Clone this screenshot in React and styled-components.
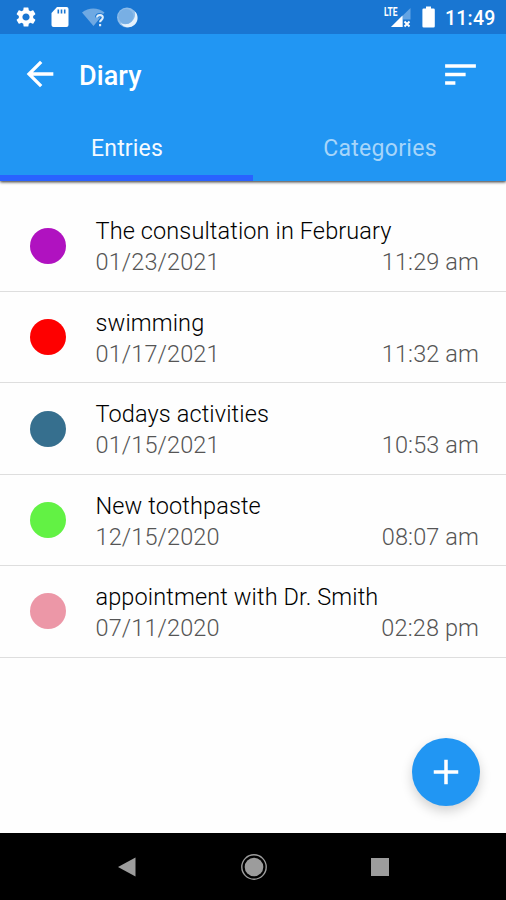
import React, { useState } from 'react';
import styled, { createGlobalStyle } from 'styled-components';
import { MdArrowBack, MdSort, MdAdd, MdSettings } from 'react-icons/md';

const GlobalStyle = createGlobalStyle`
  * {
    box-sizing: border-box;
  }

  body {
    margin: 0;
    font-family: Roboto, 'Noto Sans', sans-serif;
    background-color: #fefefe;
  }
`;

const Container = styled.div`
  display: flex;
  flex-direction: column;
  width: 506px;
  height: 900px;
  overflow: hidden;
`;

const StatusBar = styled.div`
  display: flex;
  flex: none;
  align-items: center;
  justify-content: space-between;
  height: 34px;
  padding: 0 11px 0 14px;
  background-color: #1976d2;
  color: white;
  z-index: 2;
`;

const StatusGroup = styled.div`
  display: flex;
  align-items: center;

  svg {
    display: block;
  }
`;

const Clock = styled.div`
  width: 50px;
  margin-left: 10px;
  padding-top: 3px;
  font-size: 19.5px;
  font-weight: 500;
  line-height: 22px;
  letter-spacing: 0.2px;
  white-space: nowrap;
`;

const Header = styled.div`
  flex: none;
  height: 147px;
  background-color: #2196f3;
  box-shadow: 0 1px 3px rgba(0, 0, 0, 0.85);
  z-index: 1;
`;

const Toolbar = styled.div`
  display: flex;
  align-items: center;
  height: 80px;
  padding: 0 25px 0 20px;
  color: white;

  svg {
    display: block;
  }
`;

const Title = styled.div`
  flex: 1;
  padding: 3px 0 0 19px;
  font-size: 27px;
  font-weight: 500;
  letter-spacing: 0.1px;
`;

const TabRow = styled.div`
  display: flex;
  height: 67px;
`;

const Tab = styled.div`
  display: flex;
  flex: 1;
  justify-content: center;
  align-items: center;
  padding: 7px 0 0 1px;
  font-size: 23px;
  letter-spacing: ${(props) => (props.$active ? '0.15px' : '0.3px')};
  color: ${(props) => (props.$active ? '#f4faff' : '#a6d5fa')};
  border-bottom: 6px solid ${(props) => (props.$active ? '#2962ff' : 'transparent')};
`;

const List = styled.div`
  flex: 1;
  padding-top: 19.5px;
  background-color: #fefefe;
`;

const Entry = styled.div`
  display: flex;
  align-items: center;
  height: 91.45px;
  padding: 0 27px 0 30px;
  border-bottom: 1.5px solid #dedede;
`;

const Dot = styled.div`
  width: 36px;
  height: 36px;
  margin-right: 29.5px;
  border-radius: 50%;
  background-color: ${(props) => props.color};
`;

const EntryText = styled.div`
  flex: 1;
  padding-top: 3px;
  font-size: 23.5px;
  font-weight: 300;
  line-height: 31px;
  letter-spacing: 0.12px;
`;

const EntryTitle = styled.div`
  color: black;
`;

const EntryMeta = styled.div`
  display: flex;
  justify-content: space-between;
  color: #555;
`;

const AddButton = styled.button`
  position: absolute;
  left: 412px;
  top: 738px;
  display: flex;
  justify-content: center;
  align-items: center;
  width: 68px;
  height: 68px;
  padding: 0;
  border: none;
  border-radius: 50%;
  color: white;
  background-color: #2196f3;
  box-shadow: 0 5px 12px rgba(0, 0, 0, 0.18);
`;

const NavBar = styled.div`
  display: flex;
  flex: none;
  align-items: center;
  justify-content: space-between;
  height: 67px;
  padding: 0 116px;
  background-color: black;
`;

const entries = [
  { title: 'The consultation in February', date: '01/23/2021', time: '11:29 am', color: '#b012c0' },
  { title: 'swimming', date: '01/17/2021', time: '11:32 am', color: '#fe0000' },
  { title: 'Todays activities', date: '01/15/2021', time: '10:53 am', color: '#366f8e' },
  { title: 'New toothpaste', date: '12/15/2020', time: '08:07 am', color: '#62f244' },
  { title: 'appointment with Dr. Smith', date: '07/11/2020', time: '02:28 pm', color: '#ec97a7' },
];

const tabs = ['Entries', 'Categories'];

const NotificationIcons = () => (
  <StatusGroup>
    <MdSettings size={24} />
    <svg width="100" height="34" viewBox="38 0 100 34">
      <path d="M57 7h9.500a2 2 0 0 1 2 2v16a2 2 0 0 1-2 2H53.500a2 2 0 0 1-2-2V13z" fill="white" />
      <path d="M57.500 9.500h1.600v4h-1.600zM60.700 9.500h1.600v4h-1.600zM63.900 9.500h1.600v4h-1.600z" fill="#1976d2" />
      <path d="M82 12.500C88.500 7 98 7 104.500 12.500L93.500 26z" fill="#6ea9e3" />
      <path
        d="M97 17.500c.3-3.200 5.800-3.200 5.800.2 0 2.300-2.700 2.300-2.700 4.900M100.100 24.500v2"
        fill="none"
        stroke="#1976d2"
        strokeWidth="4"
      />
      <path
        d="M97 17.500c.3-3.200 5.800-3.200 5.800.1 0 2.300-2.700 2.200-2.700 4.700M100.100 24v2.200"
        fill="none"
        stroke="#e0eefb"
        strokeWidth="2.100"
      />
      <circle cx="127" cy="17.500" r="10" fill="#8dbcea" />
      <path d="M134.500 11a9.300 9.300 0 1 1-14 12 10 10 0 0 0 14-12z" fill="#e4f1fc" />
      <circle cx="126" cy="16.500" r="7.600" fill="#78afe4" />
    </svg>
  </StatusGroup>
);

const SignalLabel = styled.span`
  align-self: flex-start;
  width: 14px;
  margin: 6px -9px 0 2px;
  font-size: 12px;
  font-weight: 700;
  line-height: 13px;
  transform: scaleX(0.7);
  transform-origin: left;
  z-index: 1;
`;

const SystemIcons = () => (
  <StatusGroup>
    <SignalLabel>LTE</SignalLabel>
    <svg width="46" height="34" viewBox="389 0 46 34">
      <path d="M410.500 8v19H391z" fill="#64a4e3" />
      <path d="M389 6h10.500v10.500H389z" fill="#1976d2" />
      <path d="M402.500 15.500V27H391z" fill="white" />
      <path d="M403 19.500h8v8h-8z" fill="#1976d2" />
      <path d="M404.500 21.500l5 5M409.500 21.500l-5 5" stroke="white" strokeWidth="1.900" />
      <path d="M426 6.500h5v2h2.500a1.300 1.300 0 0 1 1.300 1.300v16.500a1.300 1.300 0 0 1-1.300 1.300h-9.800a1.300 1.300 0 0 1-1.300-1.300V9.800a1.300 1.300 0 0 1 1.300-1.300H426z" fill="white" />
    </svg>
    <Clock>11:49</Clock>
  </StatusGroup>
);

const App = () => {
  const [activeTab, setActiveTab] = useState('Entries');

  return (
    <Container>
      <GlobalStyle />
      <StatusBar>
        <NotificationIcons />
        <SystemIcons />
      </StatusBar>
      <Header>
        <Toolbar>
          <MdArrowBack size={40} />
          <Title>Diary</Title>
          <MdSort size={41} />
        </Toolbar>
        <TabRow>
          {tabs.map((tab) => (
            <Tab key={tab} $active={tab === activeTab} onClick={() => setActiveTab(tab)}>
              {tab}
            </Tab>
          ))}
        </TabRow>
      </Header>
      <List>
        {entries.map((entry) => (
          <Entry key={entry.title}>
            <Dot color={entry.color} />
            <EntryText>
              <EntryTitle>{entry.title}</EntryTitle>
              <EntryMeta>
                <span>{entry.date}</span>
                <span>{entry.time}</span>
              </EntryMeta>
            </EntryText>
          </Entry>
        ))}
      </List>
      <AddButton>
        <MdAdd size={42} />
      </AddButton>
      <NavBar>
        <svg width="20" height="20" viewBox="0 0 20 20">
          <path d="M2 10L19.500 0.500v19z" fill="#9c9c9c" />
        </svg>
        <svg width="28" height="28" viewBox="0 0 28 28">
          <circle cx="14" cy="14" r="12.200" fill="none" stroke="#9c9c9c" strokeWidth="1.400" />
          <circle cx="14" cy="14" r="9.300" fill="#9c9c9c" />
        </svg>
        <svg width="19" height="18" viewBox="0 0 19 18">
          <path d="M0 0h18v18H0z" fill="#9c9c9c" />
        </svg>
      </NavBar>
    </Container>
  );
};

export default App;
